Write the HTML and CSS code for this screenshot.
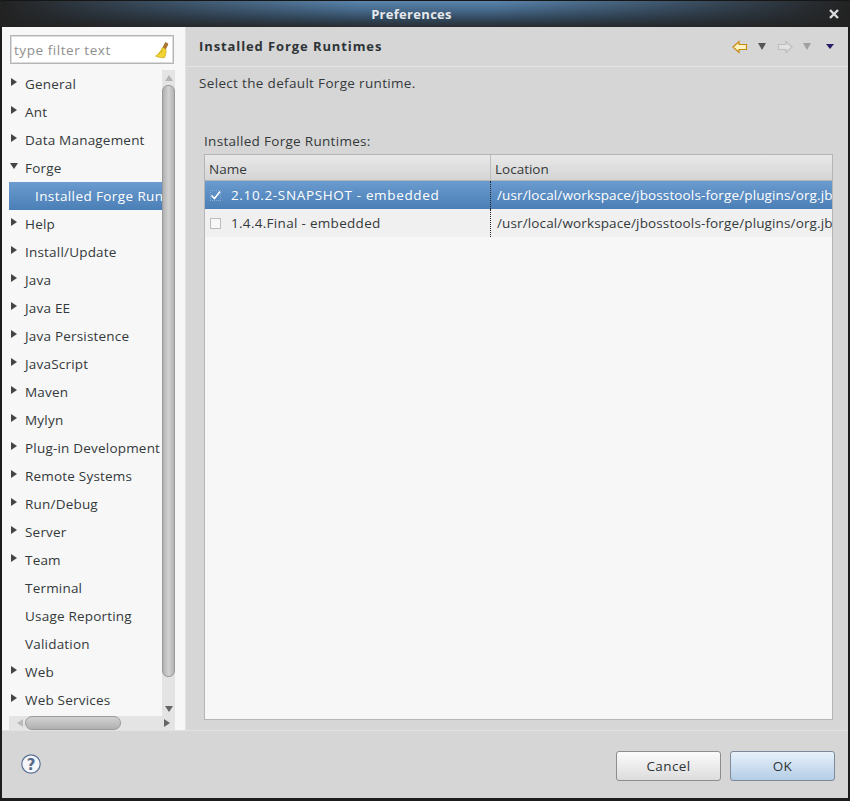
FILE: index.html
```html
<!DOCTYPE html>
<html lang="en">
<head>
<meta charset="utf-8">
<title>Preferences</title>
<link rel="stylesheet" href="styles.css">
</head>
<body>
<div class="window">
  <header class="titlebar">
    <span class="title">Preferences</span>
    <svg class="close" width="12" height="12" viewBox="0 0 12 12"><path d="M2 2l8 8M10 2l-8 8" stroke="#dcdcdc" stroke-width="2.400" fill="none"/></svg>
  </header>
  <div class="main">
    <aside class="left">
      <div class="filter">
        <span class="filter-text">type filter text</span>
        <svg class="broom" width="16" height="18" viewBox="0 0 16 18">
          <path d="M11.500 1.500l2.500 1.500-2.500 5-2.500-1.500z" fill="#b5762a" stroke="#8a5a20" stroke-width=".7"/>
          <path d="M8.500 6.500l3.500 2c.3 3-.5 6-1.500 8-2 .5-6 0-9-1.500 2.500-1 4.800-4 7-8.500z" fill="#f2d532" stroke="#c9a514" stroke-width=".7"/>
          <path d="M7 12l1.500-3M4 14l2.500-2.500" stroke="#c9a514" stroke-width=".7" fill="none"/>
        </svg>
      </div>
      <div class="tree-wrap">
        <div class="tree-row-area">
          <ul class="tree">
            <li class="node"><i class="arrow"></i>General</li>
            <li class="node"><i class="arrow"></i>Ant</li>
            <li class="node"><i class="arrow"></i>Data Management</li>
            <li class="node"><i class="arrow open"></i>Forge</li>
            <li class="node selected child">Installed Forge Runtimes</li>
            <li class="node"><i class="arrow"></i>Help</li>
            <li class="node"><i class="arrow"></i>Install/Update</li>
            <li class="node"><i class="arrow"></i>Java</li>
            <li class="node"><i class="arrow"></i>Java EE</li>
            <li class="node"><i class="arrow"></i>Java Persistence</li>
            <li class="node"><i class="arrow"></i>JavaScript</li>
            <li class="node"><i class="arrow"></i>Maven</li>
            <li class="node"><i class="arrow"></i>Mylyn</li>
            <li class="node"><i class="arrow"></i>Plug-in Development</li>
            <li class="node"><i class="arrow"></i>Remote Systems</li>
            <li class="node"><i class="arrow"></i>Run/Debug</li>
            <li class="node"><i class="arrow"></i>Server</li>
            <li class="node"><i class="arrow"></i>Team</li>
            <li class="node"><i class="arrow none"></i>Terminal</li>
            <li class="node"><i class="arrow none"></i>Usage Reporting</li>
            <li class="node"><i class="arrow none"></i>Validation</li>
            <li class="node"><i class="arrow"></i>Web</li>
            <li class="node"><i class="arrow"></i>Web Services</li>
          </ul>
          <div class="vscroll">
            <i class="tri tri-up"></i>
            <div class="vtrough"><div class="vthumb"></div></div>
            <i class="tri tri-down"></i>
          </div>
        </div>
        <div class="hscroll">
          <i class="tri tri-left"></i>
          <div class="htrough"><div class="hthumb"></div></div>
          <i class="tri tri-right"></i>
        </div>
      </div>
    </aside>
    <section class="right">
      <div class="page-head">
        <h1 class="page-title">Installed Forge Runtimes</h1>
        <div class="nav">
          <svg class="nav-back" width="16" height="14" viewBox="0 0 16 14"><path d="M1 7l6-5.500v3h7.500v5H7v3z" fill="#fff3c0" stroke="#c98a12" stroke-width="1.200"/></svg>
          <i class="menu-tri dark"></i>
          <svg class="nav-fwd" width="16" height="14" viewBox="0 0 16 14"><path d="M15 7L9 1.500v3H1.500v5H9v3z" fill="#e2e2e2" stroke="#bdbdbd" stroke-width="1.200"/></svg>
          <i class="menu-tri light"></i>
          <i class="menu-tri purple"></i>
        </div>
      </div>
      <p class="desc">Select the default Forge runtime.</p>
      <div class="group">
        <div class="group-label">Installed Forge Runtimes:</div>
        <div class="table">
          <div class="thead">
            <div class="th col-name">Name</div>
            <div class="th col-loc">Location</div>
          </div>
          <div class="tr tr-selected">
            <div class="td col-name snap"><span class="check checked"><svg width="11" height="11" viewBox="0 0 11 11"><path d="M1.500 5.500l3 3 5.500-7" stroke="#fff" stroke-width="1.600" fill="none"/></svg></span>2.10.2-SNAPSHOT - embedded</div>
            <div class="td col-loc">/usr/local/workspace/jbosstools-forge/plugins/org.jboss.forge.runtime</div>
          </div>
          <div class="tr tr-alt">
            <div class="td col-name"><span class="check"></span>1.4.4.Final - embedded</div>
            <div class="td col-loc">/usr/local/workspace/jbosstools-forge/plugins/org.jboss.forge.runtime</div>
          </div>
        </div>
      </div>
    </section>
  </div>
  <footer class="footer">
    <svg class="help" width="20" height="20" viewBox="0 0 20 20">
      <circle cx="10" cy="10" r="9.200" fill="#f4f6fa" stroke="#5c7398" stroke-width="1.200"/>
      <text x="10" y="15.500" text-anchor="middle" class="help-q">?</text>
    </svg>
    <div class="buttons">
      <button class="btn">Cancel</button>
      <button class="btn btn-ok">OK</button>
    </div>
  </footer>
</div>
</body>
</html>
```

FILE: styles.css
```css
* { box-sizing: border-box; }
html, body { margin: 0; padding: 0; }
body {
  width: 850px;
  height: 801px;
  background: #1c1c1c;
  font-family: "Open Sans", "Noto Sans", sans-serif;
  font-size: 13.5px;
  color: #34393b;
  overflow: hidden;
}
.window { width: 850px; height: 801px; display: flex; flex-direction: column; padding: 0 2px 3px; }

.titlebar {
  height: 27px;
  margin: 0 -2px;
  padding-right: 27px;
  flex: none;
  display: flex;
  align-items: center;
  justify-content: center;
  position: relative;
  border-radius: 5px 5px 0 0;
  background:
    linear-gradient(90deg, #222 0, rgba(34,34,34,.45) 22%, rgba(34,34,34,0) 42%, rgba(34,34,34,0) 58%, rgba(34,34,34,.45) 78%, #222 100%),
    linear-gradient(180deg, #5a85ad 0, #46698b 35%, #2f4355 75%, #2a2c2e 100%);
  border-top: 1px solid #161616;
}
.title { color: #e6e9ec; font-weight: 700; font-size: 13px; letter-spacing: .3px; }
.close { position: absolute; right: 10px; top: 7px; }

.main { flex: 1; display: flex; min-height: 0; }

.left {
  width: 183px;
  flex: none;
  background: #f7f7f7;
  padding: 8px 10px 0 7px;
  display: flex;
  flex-direction: column;
}
.filter {
  height: 29px;
  flex: none;
  margin: 0 1px 6px 1px;
  border: 1px solid #b5b5b5;
  outline: 1px solid #dcdcdc;
  outline-offset: -2px;
  background: #fff;
  display: flex;
  align-items: center;
  justify-content: space-between;
  padding: 0 3px 0 3px;
}
.filter-text { color: #8f8f8f; font-size: 13.5px; letter-spacing: .55px; }
.broom { flex: none; }

.tree-wrap { flex: 1; min-height: 0; display: flex; flex-direction: column; }
.tree-row-area { flex: 1; min-height: 0; display: flex; }
.tree { list-style: none; margin: 0; padding: 0; flex: 1; min-width: 0; overflow: hidden; }
.node {
  height: 28px;
  display: flex;
  align-items: center;
  white-space: nowrap;
  overflow: hidden;
  padding-left: 1px;
  letter-spacing: .2px;
}
.arrow {
  flex: none;
  width: 0; height: 0;
  margin: 0 8px 0 1px;
  border-left: 6px solid #444;
  border-top: 4px solid transparent;
  border-bottom: 4px solid transparent;
  position: relative;
  top: -2px;
}
.arrow.open {
  border-left: 4px solid transparent;
  border-right: 4px solid transparent;
  border-top: 6px solid #444;
  border-bottom: 0;
  margin: 0 7px 0 0;
}
.arrow.none { border-color: transparent; }
.node.selected {
  background: linear-gradient(180deg, #6b9bcf 0, #4a7fb6 100%);
  color: #fff;
  letter-spacing: .4px;
}
.node.child { padding-left: 26px; }

.vscroll {
  width: 13px;
  flex: none;
  background: #e4e4e4;
  display: flex;
  flex-direction: column;
  align-items: center;
}
.vtrough { flex: 1; width: 100%; display: flex; flex-direction: column; }
.vthumb {
  height: 592px;
  width: 13px;
  background: linear-gradient(90deg, #b0b0b0, #d2d2d2 50%, #b4b4b4);
  border: 1px solid #9a9a9a;
  border-radius: 6px;
}
.tri { display: block; width: 0; height: 0; flex: none; }
.tri-up { margin: 5px 0 4px; border-left: 4px solid transparent; border-right: 4px solid transparent; border-bottom: 6px solid #b4b4b4; }
.tri-down { margin: 4px 0 4px; border-left: 4px solid transparent; border-right: 4px solid transparent; border-top: 6px solid #666; }
.tri-left { margin: 0 5px 0 8px; border-top: 4px solid transparent; border-bottom: 4px solid transparent; border-right: 6px solid #bbb; }
.tri-right { margin: 0 5px 0 5px; border-top: 4px solid transparent; border-bottom: 4px solid transparent; border-left: 6px solid #666; }

.hscroll {
  height: 14px;
  flex: none;
  background: #e4e4e4;
  display: flex;
  align-items: center;
}
.htrough { flex: 1; height: 100%; }
.hthumb {
  width: 96px;
  height: 14px;
  background: linear-gradient(180deg, #d2d2d2, #b0b0b0);
  border: 1px solid #9a9a9a;
  border-radius: 7px;
  margin-left: -3px;
}

.right {
  flex: 1;
  min-width: 0;
  background: #d6d6d6;
  border-left: 1px solid #e2e2e2;
  padding: 0 15px 10px 13px;
  display: flex;
  flex-direction: column;
}
.page-head {
  height: 40px;
  flex: none;
  margin: 0 -15px 0 -13px;
  padding: 0 14px 0 13px;
  display: flex;
  align-items: center;
  justify-content: space-between;
  border-bottom: 1px solid #e4e4e4;
}
.page-title { margin: 0; font-size: 13px; font-weight: 700; color: #2e3436; letter-spacing: .9px; position: relative; top: -1px; }
.nav { display: flex; align-items: center; }
.nav-back { margin-right: 10px; }
.nav-fwd { margin: 0 10px 0 11px; }
.menu-tri {
  display: block; width: 0; height: 0;
  border-left: 4px solid transparent;
  border-right: 4px solid transparent;
  border-top: 7px solid #555;
}
.menu-tri.light { border-top-color: #a0a0a0; }
.menu-tri.purple { border-top-color: #2b1d66; border-top-width: 5px; margin-left: 15px; }
.desc { margin: 6px 0 0; height: 20px; line-height: 20px; letter-spacing: .33px; }
.group { flex: 1; min-height: 0; display: flex; flex-direction: column; padding: 38px 0 0 5px; }
.group-label { height: 23px; line-height: 20px; flex: none; letter-spacing: .3px; }
.table {
  flex: 1;
  min-height: 0;
  background: #f7f7f7;
  border: 1px solid #b5b5b5;
  overflow: hidden;
}
.thead {
  height: 26px;
  display: flex;
  background: linear-gradient(180deg, #e9e9e9, #d4d4d4);
  border-bottom: 1px solid #b5b5b5;
}
.col-name { width: 285px; flex: none; }
.col-loc { flex: 1; min-width: 0; }
.th { padding: 3px 4px 0; line-height: 22px; }
.th.col-name { border-right: 1px solid #bdbdbd; width: 286px; }
.tr { height: 28px; display: flex; align-items: stretch; }
.td { display: flex; align-items: center; white-space: nowrap; overflow: hidden; }
.td.col-name { width: 286px; padding-left: 5px; border-right: 1px dotted #222; letter-spacing: .3px; }
.td.col-name.snap { letter-spacing: .65px; }
.td.col-loc { padding-left: 6px; letter-spacing: .13px; }
.tr-selected { background: linear-gradient(180deg, #6b9bcf 0, #4a7fb6 100%); color: #fff; }
.tr-alt { background: #f0f0f0; }
.check {
  width: 11px; height: 11px;
  flex: none;
  margin-right: 10px;
  border: 1px solid #bdbdbd;
  background: #f7f7f7;
  display: block;
}
.check svg { display: block; margin: -1px; }
.check.checked { background: transparent; border: 1px dotted #85a9cf; }

.footer {
  height: 68px;
  flex: none;
  background: #d6d6d6;
  border-top: 1px solid #e2e2e2;
  display: flex;
  align-items: center;
  justify-content: space-between;
  padding: 0 13px 0 19px;
}
.help { position: relative; top: -1px; }
.help-q { font-family: "DejaVu Sans", sans-serif; font-weight: 700; font-size: 15px; fill: #55698a; }
.buttons { display: flex; gap: 9px; margin-top: 3px; }
.btn {
  width: 105px;
  height: 30px;
  font: inherit;
  letter-spacing: .4px;
  color: #2e3436;
  padding: 0;
  border: 1px solid #8d8d8d;
  border-radius: 3px;
  background: linear-gradient(180deg, #fbfbfb, #dcdcdc);
}
.btn-ok { background: linear-gradient(180deg, #e8f1fa, #b4cde6); border-color: #7d8a99; }
```
